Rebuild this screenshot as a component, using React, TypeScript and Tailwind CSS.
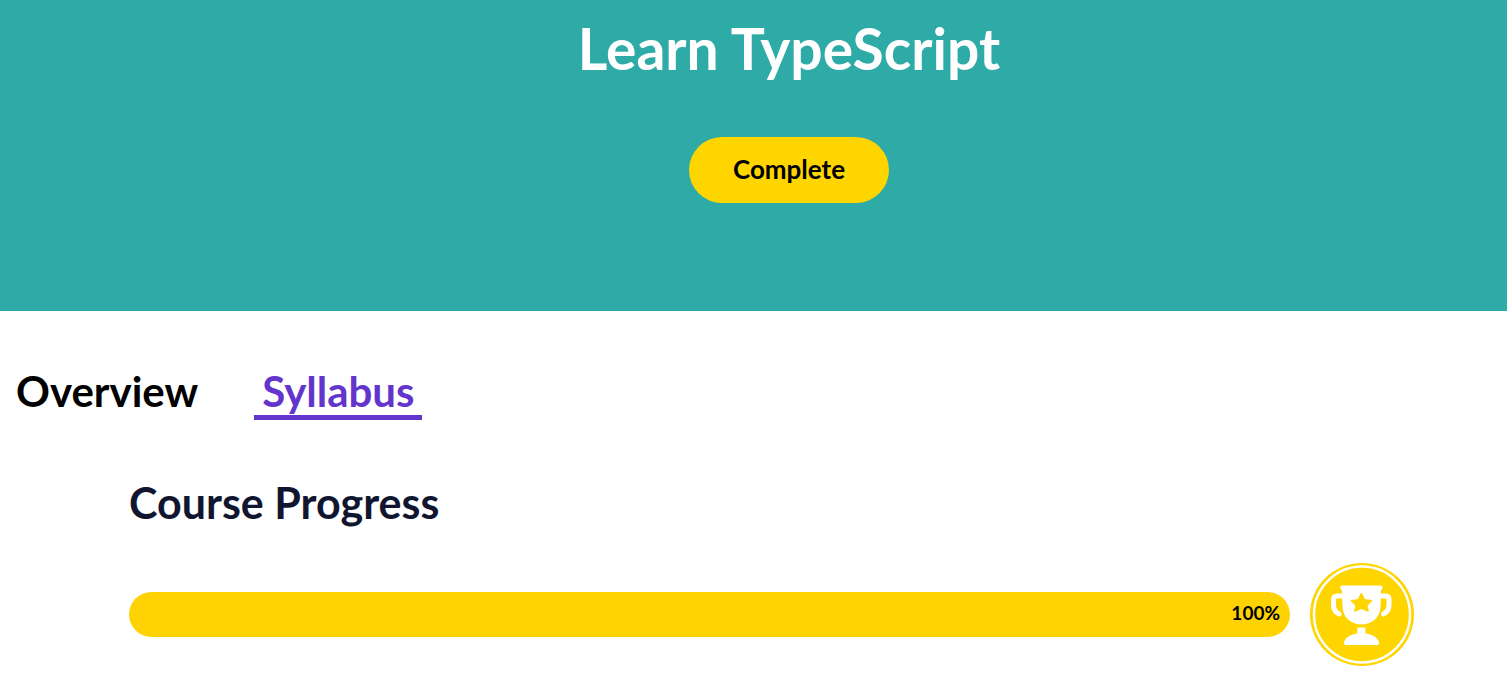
function TrophyBadge() {
  return (
    <svg viewBox="0 0 104 104" className="size-[104px] shrink-0" role="img" aria-label="Course completed">
      <ellipse cx="52" cy="52.500" rx="52" ry="51.500" fill="#ffd500" />
      <circle cx="52" cy="52.500" r="48" fill="none" stroke="#fff" strokeWidth="2.4" />
      <path
        d="M32 23.500H70.500Q72.500 23.500 72.500 25.500Q72.500 27.500 71 28.500L70.500 44C70.500 56 61 62.500 51.500 62.500C42 62.500 32.500 56 32.500 44L32 28.500Q30.300 27.500 30.300 25.500Q30.300 23.500 32 23.500Z"
        fill="#fff"
      />
      <path
        d="M31.500 34H27Q23.500 34 23.500 37.500V43Q23.500 49 29 52M71.500 34H75.500Q79 34 79 37.500V43Q79 49 73.500 52"
        fill="none"
        stroke="#fff"
        strokeWidth="5"
        strokeLinecap="round"
      />
      <path
        d="M47.300 65.500H55.500V71.500C60 72 66 74 68.300 78.500Q70 81.500 68 83H35Q33 81.500 34.700 78.500C37 74 43 72 47.300 71.500Z"
        fill="#fff"
      />
      <path
        d="M51.400 31.700L54.600 37.800L61.500 38.600L56.700 43.500L58 49L51.400 46L44.800 49L46.100 43.500L41.300 38.600L48.200 37.800Z"
        fill="#ffd500"
        stroke="#ffd500"
        strokeWidth="1.4"
        strokeLinejoin="round"
      />
    </svg>
  );
}

export default function App() {
  return (
    <main className="bg-white font-['Lato',sans-serif] font-bold text-black">
      <header className="flex flex-col items-center bg-[#2eaaa7] pt-4 pb-[108px] pl-[71px]">
        <h1 className="text-[57px] leading-[64px] text-white">Learn TypeScript</h1>
        <button type="button" className="mt-[57px] h-[66px] w-[200px] rounded-full bg-[#ffd500] pb-0.5 text-[26px] leading-8">
          Complete
        </button>
      </header>
      <nav aria-label="Course sections" className="flex gap-12 px-2 pt-14 text-[42px] leading-[48px]">
        <a href="#overview" className="border-b-5 border-transparent px-2">
          Overview
        </a>
        <a href="#syllabus" aria-current="page" className="border-b-5 border-[#6335cc] px-2 text-[#6335cc]">
          Syllabus
        </a>
      </nav>
      <section id="syllabus" className="pt-[59px] pr-[93px] pb-2 pl-[129px]">
        <h2 className="text-[43px] leading-[48px] text-[#10162f]">Course Progress</h2>
        <div className="mt-[35px] flex items-center gap-5">
          <div
            role="progressbar"
            aria-label="Course Progress"
            aria-valuenow={100}
            aria-valuemin={0}
            aria-valuemax={100}
            className="flex h-[45px] flex-1 items-center justify-end rounded-full bg-[#ffd204] pr-[10px] pb-0.5 text-[19px]"
          >
            100%
          </div>
          <TrophyBadge />
        </div>
      </section>
    </main>
  );
}
